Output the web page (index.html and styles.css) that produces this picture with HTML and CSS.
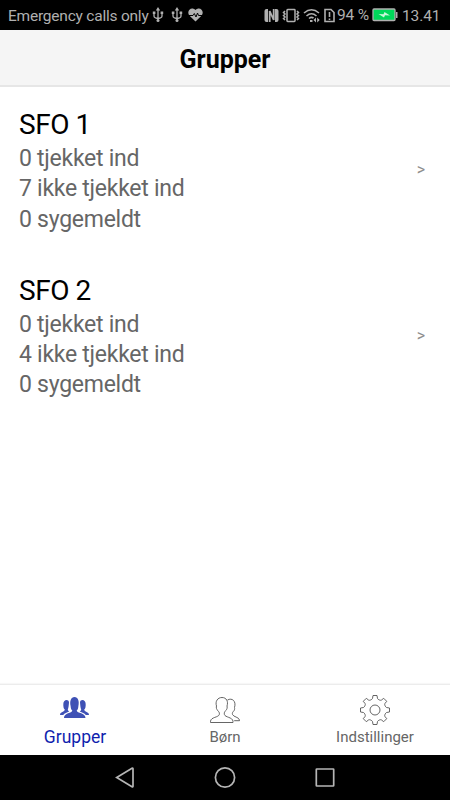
FILE: index.html
```html
<!DOCTYPE html>
<html lang="da">
<head>
<meta charset="utf-8">
<title>Grupper</title>
<link rel="stylesheet" href="styles.css">
</head>
<body>
<div class="status">
  <span class="carrier">Emergency calls only</span>
  <svg class="usb" width="12" height="16" viewBox="0 0 12 16"><path d="M6 2v12M2 6v3q0 2 4 2.500q4-.5 4-2.500V6"/><path class="solid" d="M6 0l2.200 3.500H3.800zM.8 4.500h2.600v2.500H.8zM8.600 4.500h2.600v2.500H8.600z"/><circle class="solid" cx="6" cy="13.500" r="1.500"/></svg>
  <svg class="usb second" width="12" height="16" viewBox="0 0 12 16"><path d="M6 2v12M2 6v3q0 2 4 2.500q4-.5 4-2.500V6"/><path class="solid" d="M6 0l2.200 3.500H3.800zM.8 4.500h2.600v2.500H.8zM8.600 4.500h2.600v2.500H8.600z"/><circle class="solid" cx="6" cy="13.500" r="1.500"/></svg>
  <svg class="heart" width="15" height="14" viewBox="0 0 15 14"><path class="solid" d="M7.500 13.500L1.300 7.500C-2 3 3.500-2.300 7.500 2C11.500-2.300 17 3 13.700 7.500z"/><path class="pulse" d="M1 7.500h4l1.300-2 1.700 3.500 1.500-4 1 2.500H14"/></svg>
  <div class="indicators">
    <svg width="15" height="15" viewBox="0 0 15 15"><path class="solid" d="M2.500 1H4v13H2.500Q.5 14 .5 12V3Q.5 1 2.500 1zM11 1h1.500q2 0 2 2v9q0 2-2 2H11z"/><path class="nfc" d="M5.700 14V3l4 9V1"/></svg>
    <svg class="vibrate" width="18" height="15" viewBox="0 0 18 15"><rect x="5" y="1.500" width="8" height="12" rx=".7"/><path d="M3 3L1.500 4.500 3 6 1.500 7.500 3 9l-1.500 1.500L3 12M15 3l1.500 1.500L15 6l1.500 1.500L15 9l1.500 1.500L15 12"/></svg>
    <svg class="wifi" width="18" height="15" viewBox="0 0 18 15"><path d="M1 5q7.500-6.500 15 0M3.500 8q5-4.500 10 0M6 10.500q2.500-2 4.500-.3"/><path class="solid" d="M7 12h2.500v2H7zM13 9.500v5l-2.500-2.500zM14.200 9.500v5l2.500-2.500z"/></svg>
    <svg class="sim" width="11" height="15" viewBox="0 0 11 15"><path d="M1 1.500h6l3 3v9H1zM5.500 4v5M5.500 10.500v1.500"/></svg>
    <span class="percent">94 %</span>
    <svg class="battery" width="26" height="14" viewBox="0 0 26 14"><rect class="cell" x="1" y="1" width="22" height="11.500" rx="1"/><path class="solid" d="M24 4h1.500v6H24z"/><path class="bolt" d="M6.500 6l5 .2 1-2.200 5.500 3.500-5-.2-1 2.200z"/></svg>
    <span class="time">13.41</span>
  </div>
</div>
<header class="header"><h1>Grupper</h1></header>
<main class="groups">
  <section class="group">
    <div><h2>SFO 1</h2><p>0 tjekket ind</p><p>7 ikke tjekket ind</p><p>0 sygemeldt</p></div>
    <span class="chevron">&gt;</span>
  </section>
  <section class="group">
    <div><h2>SFO 2</h2><p>0 tjekket ind</p><p>4 ikke tjekket ind</p><p>0 sygemeldt</p></div>
    <span class="chevron">&gt;</span>
  </section>
</main>
<nav class="tabs">
  <a class="tab active">
    <svg width="30" height="30" viewBox="0 0 30 30"><path d="M4 23c0-5.500 8-4.500 8.300-7.500-1.200-1-1.500-2.500-1.700-4.500C9.500 6 11 2 14.500 2s5 4 3.900 9c-.2 2-.5 3.500-1.700 4.500.3 3 8.800 2 8.800 7.500zM0 20c0-3.500 4.700-3 4.800-5.500C3.500 13.500 3.500 12 3.300 10 2.800 4.200 8.800 3.800 9 7.500c-.3 3.500-.5 5.500-1.200 7 .2 1 .7 1.500 1.400 2C7 17.500 4.500 18 3.200 20zM29 20c0-3.500-4.700-3-4.800-5.500 1.300-1 1.300-2.500 1.500-4.500.5-5.800-5.500-6.200-5.700-2.500.3 3.500.5 5.500 1.200 7-.2 1-.7 1.500-1.400 2 2.200 1 4.700 1.500 6 3.500z"/></svg>
    <span>Grupper</span>
  </a>
  <a class="tab">
    <svg width="30" height="30" viewBox="0 0 30 30"><path d="M.5 27.500v-1.300C1 22 8.500 22.500 9.300 19.500c.4-2.200-.5-2.500-1.500-4C6.500 15 6 12 6.500 11 5 6.500 7.500 2.500 12 2.500s6.500 4 5 8.500c.5 1 0 4-1.300 4.500-1 1.500-1.700 1.800-1.300 4 .8 3 8 2.500 8.600 6.700v1.300zM17.500 5c4.500-2.500 9 1 7 7.500.5 1-.2 3.500-1.200 4-.8 1-1.200 1.500-.8 3 .8 2.500 6.500 2.500 7 5.500v.7h-5.300"/></svg>
    <span>Børn</span>
  </a>
  <a class="tab">
    <svg width="30" height="30" viewBox="-15 -15 30 30"><path d="M-2-14.500H2L2.500-11.500C3-10.500 5.400-9.200 6.400-9.900L8.700-11.700 11.700-8.700 9.900-6.400C9.200-5.400 10.500-3 11.500-2.500L14.500-2V2L11.500 2.500C10.500 3 9.200 5.400 9.900 6.400L11.700 8.700 8.700 11.700 6.400 9.900C5.400 9.200 3 10.500 2.500 11.500L2 14.500H-2L-2.500 11.500C-3 10.500-5.400 9.200-6.400 9.900L-8.700 11.700-11.700 8.700-9.900 6.400C-9.200 5.400-10.500 3-11.500 2.500L-14.500 2V-2L-11.500-2.500C-10.500-3-9.200-5.400-9.900-6.400L-11.700-8.700-8.700-11.700-6.400-9.900C-5.400-9.200-3-10.500-2.500-11.500z"/><circle r="5"/></svg>
    <span>Indstillinger</span>
  </a>
</nav>
<div class="system">
  <svg width="100" height="24" viewBox="0 0 100 24"><path d="M66.700 12.500L82 3.300Q83 2.800 83 4v17q0 1.200-1 .7z"/></svg>
  <svg width="100" height="24" viewBox="0 0 100 24"><circle cx="50" cy="12.500" r="9.600"/></svg>
  <svg width="100" height="24" viewBox="0 0 100 24"><rect x="16.300" y="4" width="17.400" height="17" rx=".5"/></svg>
</div>
</body>
</html>
```

FILE: styles.css
```css
* { box-sizing: border-box; }
body {
  margin: 0;
  width: 450px;
  height: 800px;
  display: flex;
  flex-direction: column;
  overflow: hidden;
  background: #fff;
  font-family: Roboto, "Liberation Sans", sans-serif;
}
h1, h2, p { margin: 0; font-weight: 400; }
svg { display: block; flex: none; fill: none; }
.status {
  height: 30px;
  padding: 0 10px 0 8px;
  display: flex;
  align-items: center;
  background: #000;
  color: #b0b0b0;
  font-size: 15.5px;
  line-height: 30px;
  white-space: nowrap;
}
.carrier { width: 144px; padding-top: 1px; letter-spacing: -.22px; }
.status svg { stroke: #b0b0b0; stroke-width: 1.3; }
.status .solid { fill: #b0b0b0; stroke: none; }
.status .second { margin-left: 7px; }
.status .heart { margin-left: 5px; }
.status .pulse { stroke: #000; stroke-width: 1; }
.status .nfc { stroke-width: 1.8; }
.indicators { display: flex; align-items: center; margin-left: auto; }
.status .vibrate { margin-left: 3px; stroke-width: 1.5; }
.status .wifi { margin-left: 3px; stroke-width: 1.6; }
.status .sim { margin-left: 3px; stroke-width: 1.6; }
.percent { width: 34px; margin-left: 2px; letter-spacing: -.2px; }
.status .battery { margin-left: 1px; }
.battery .cell { fill: #00d85a; }
.status .bolt { fill: #c9f7d9; stroke: none; }
.time { width: 38px; margin-left: 4px; padding-top: 1px; letter-spacing: -.1px; }
.header {
  height: 57px;
  border-bottom: 2px solid #e6e6e6;
  background: #f5f5f5;
  text-align: center;
}
.header h1 { font-size: 25px; font-weight: 700; line-height: 59px; }
.groups { flex: 1; padding-top: 19px; }
.group {
  height: 165.500px;
  padding: 0 25px 0 19px;
  display: flex;
  justify-content: space-between;
}
.group h2 { font-size: 28px; line-height: 38px; letter-spacing: -.45px; }
.group p { color: #666; font-size: 23px; line-height: 30.400px; letter-spacing: -.27px; }
.chevron { margin-top: 54px; color: #8e8e8e; font-size: 16px; line-height: 20px; }
.tabs {
  height: 71px;
  display: flex;
  border-top: 1px solid #ececec;
  box-shadow: 0 -1px 1px #f7f7f7;
}
.tab {
  width: 150px;
  padding-top: 10px;
  display: flex;
  flex-direction: column;
  align-items: center;
  color: #666;
  font-size: 15px;
  line-height: 25px;
}
.tab svg { stroke: #555; stroke-width: .9; }
.tab.active { color: #101fae; font-size: 17.500px; }
.tab.active svg { fill: #3f51b5; stroke: none; }
.system {
  height: 45px;
  padding: 10px 50px;
  display: flex;
  justify-content: space-between;
  background: #000;
}
.system svg { stroke: #b5b5b5; stroke-width: 1.700; }
```
